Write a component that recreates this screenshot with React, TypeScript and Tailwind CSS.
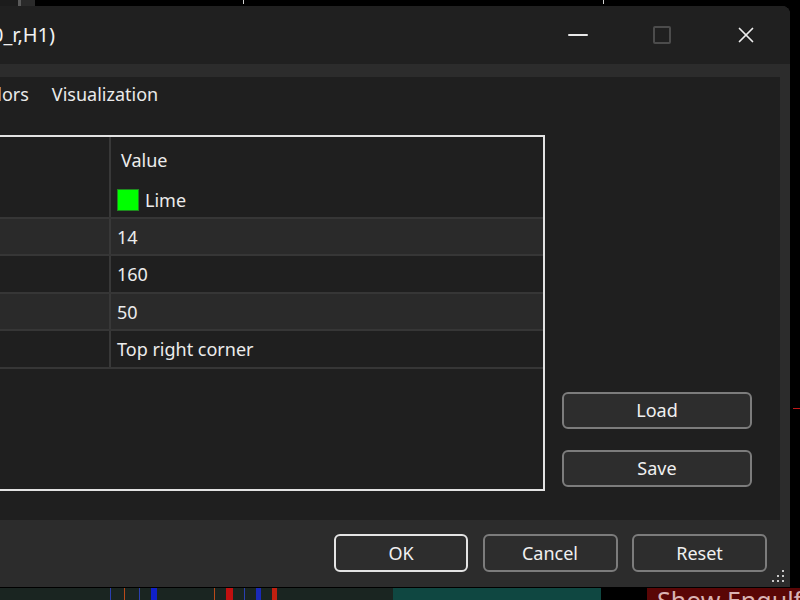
import { X } from "lucide-react";

const FONT = { fontFamily: '"Segoe UI", "Noto Sans", "Open Sans", sans-serif' };

const rows = [
  { label: "14", shade: true },
  { label: "160", shade: false },
  { label: "50", shade: true },
  { label: "Top right corner", shade: false },
];

// chart candles peeking out under the dialog
const candles = [
  { x: 110, w: 1, c: "#2a3fb0" },
  { x: 124, w: 1, c: "#b84a1a" },
  { x: 139, w: 1, c: "#2a3fb0" },
  { x: 151, w: 6, c: "#1020c8" },
  { x: 214, w: 1, c: "#b84a1a" },
  { x: 226, w: 7, c: "#c01010" },
  { x: 244, w: 1, c: "#2a3fb0" },
  { x: 256, w: 5, c: "#1a2ab8" },
  { x: 272, w: 5, c: "#c02010" },
];

function Btn({ children, primary, className = "" }: { children: string; primary?: boolean; className?: string }) {
  return (
    <button
      className={`flex items-center justify-center rounded-[6px] bg-[#2d2d2d] text-[18px] text-[#f0f0f0] ${
        primary ? "border-2 border-[#e4e4e4]" : "border-2 border-[#7c7c7c]"
      } ${className}`}
    >
      {children}
    </button>
  );
}

export default function App() {
  return (
    <div className="relative w-[800px] h-[600px] overflow-hidden bg-black" style={FONT}>
      {/* chart bits behind the dialog */}
      <div className="absolute left-0 top-0 h-[6px] w-[18px] bg-[#1c1c1c]" />
      <div className="absolute left-[18px] top-0 h-[6px] w-[3px] bg-[#5a5a5a]" />
      <div className="absolute left-[21px] top-0 h-[6px] w-[14px] bg-[#2a2a2a]" />
      <div className="absolute left-[243px] top-0 h-[4px] w-[1px] bg-[#d0d0d0]" />
      <div className="absolute left-[603px] top-0 h-[4px] w-[1px] bg-[#d0d0d0]" />
      <div className="absolute left-[793px] top-[408px] h-[1px] w-[7px] bg-[#c01818]" />

      <div className="absolute left-0 top-[588px] h-[12px] w-[393px] bg-[#1a2521]" />
      <div className="absolute left-[393px] top-[588px] h-[12px] w-[208px] bg-[#0f4741]" />
      {candles.map((k, i) => (
        <div key={i} className="absolute top-[588px] h-[12px]" style={{ left: k.x, width: k.w, background: k.c }} />
      ))}
      <div className="absolute left-[647px] top-[588px] h-[30px] w-[200px] whitespace-nowrap bg-[#5a0606] pl-[10px] text-[25px] leading-[24px] text-[#d9b3b3]">
        Show Engulfing
      </div>

      {/* dialog window */}
      <div className="absolute left-0 top-[6px] flex h-[581px] w-[790px] flex-col overflow-hidden rounded-tr-[8px] bg-[#2c2c2c]">
        <div className="flex h-[58px] items-center bg-[#202020]">
          <span className="-ml-[8px] text-[20px] text-[#f2f2f2]">0_r,H1)</span>
          <div className="ml-auto flex h-full pr-[2px]">
            <div className="flex w-[84px] items-center justify-center">
              <div className="h-[2px] w-[20px] rounded-full bg-[#e8e8e8]" />
            </div>
            <div className="flex w-[84px] items-center justify-center">
              <div className="h-[18px] w-[18px] rounded-[2px] border-2 border-[#4c4c4c]" />
            </div>
            <div className="flex w-[84px] items-center justify-center text-[#ededed]">
              <X size={26} strokeWidth={1.6} />
            </div>
          </div>
        </div>

        <div className="flex flex-1 flex-col pt-[13px]">
          <div className="mr-[10px] flex h-[443px] flex-col bg-[#1f1f1f]">
            <div className="flex h-[34px] items-center gap-[23px] -ml-[25px] text-[18px] text-[#eaeaea]">
              <span>Colors</span>
              <span>Visualization</span>
            </div>

            <div className="mt-[24px] flex items-stretch">
              <div className="-ml-[4px] flex h-[356px] w-[549px] flex-col border-2 border-[#e2e2e2] text-[18px] text-[#ececec]">
                <div className="flex h-[44px] shrink-0">
                  <div className="w-[113px] border-r-2 border-[#383838]" />
                  <div className="flex items-center pl-[10px] pt-[2px]">Value</div>
                </div>
                <div className="flex h-[37.5px] shrink-0 border-b-2 border-[#363636]">
                  <div className="w-[113px] border-r-2 border-[#383838]" />
                  <div className="flex items-center gap-[6px] pl-[6px] pt-[3px]">
                    <div className="h-[22px] w-[22px] border border-[#1f8a1f] bg-[#00ff00]" />
                    <span>Lime</span>
                  </div>
                </div>
                {rows.map((r) => (
                  <div
                    key={r.label}
                    className={`flex h-[37.5px] shrink-0 border-b-2 border-[#363636] ${r.shade ? "bg-[#2a2a2a]" : "bg-[#1f1f1f]"}`}
                  >
                    <div className="w-[113px] border-r-2 border-[#383838]" />
                    <div className="flex items-center pl-[6px] pt-[2px]">{r.label}</div>
                  </div>
                ))}
              </div>

              <div className="ml-[17px] flex w-[190px] flex-col justify-end gap-[21px] pb-[4px]">
                <Btn className="h-[37px]">Load</Btn>
                <Btn className="h-[37px]">Save</Btn>
              </div>
            </div>
          </div>

          <div className="relative flex flex-1 justify-end gap-[14.5px] pr-[23px] pt-[14px]">
            <Btn primary className="h-[38px] w-[134px]">OK</Btn>
            <Btn className="h-[38px] w-[135px]">Cancel</Btn>
            <Btn className="h-[38px] w-[135px]">Reset</Btn>
            <div className="absolute bottom-[5px] right-[6px] grid grid-cols-3 gap-[3px]">
              <span className="h-[2px] w-[2px]" />
              <span className="h-[2px] w-[2px]" />
              <span className="h-[2px] w-[2px] bg-[#c8c8c8]" />
              <span className="h-[2px] w-[2px]" />
              <span className="h-[2px] w-[2px] bg-[#c8c8c8]" />
              <span className="h-[2px] w-[2px] bg-[#c8c8c8]" />
              <span className="h-[2px] w-[2px] bg-[#c8c8c8]" />
              <span className="h-[2px] w-[2px] bg-[#c8c8c8]" />
              <span className="h-[2px] w-[2px] bg-[#c8c8c8]" />
            </div>
          </div>
        </div>
      </div>
    </div>
  );
}
